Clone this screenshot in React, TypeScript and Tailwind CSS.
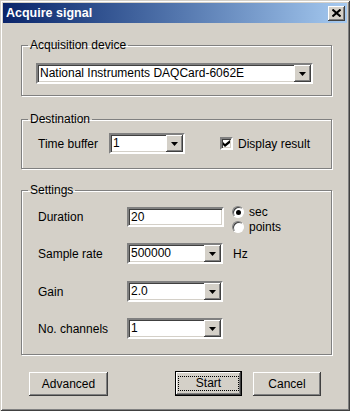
const font = "font-['Liberation_Sans',Arial,sans-serif] text-[12px] text-black";

const sunken =
  "border-2 border-t-[#808080] border-l-[#808080] border-b-white border-r-white shadow-[inset_1px_1px_0_#404040,inset_-1px_-1px_0_#d4d0c8]";

const raised =
  "bg-[#d4d0c8] shadow-[inset_-1px_-1px_0_#404040,inset_1px_1px_0_#ffffff,inset_-2px_-2px_0_#808080,inset_2px_2px_0_#d4d0c8]";

const DropButton = () => (
  <div className={`flex h-full w-[17px] items-center justify-center ${raised}`}>
    <svg width="7" height="4" viewBox="0 0 7 4">
      <path d="M0 0h7L3.5 4z" fill="#000" />
    </svg>
  </div>
);

const Combo = ({ value, width }: { value: string; width: string }) => (
  <div className={`flex h-[21px] bg-white ${width} ${sunken}`}>
    <span className="flex-1 pl-[2px] leading-[17px]">{value}</span>
    <DropButton />
  </div>
);

const GroupBox = ({
  title,
  className,
  children,
}: {
  title: string;
  className: string;
  children: React.ReactNode;
}) => (
  <fieldset
    className={`mx-0 border border-[#808080] p-0 shadow-[1px_1px_0_#ffffff,inset_1px_1px_0_#ffffff] ${className}`}
  >
    <legend className="ml-[6px] px-[2px] leading-[16px]">{title}</legend>
    {children}
  </fieldset>
);

const Button = ({ label, width, isDefault }: { label: string; width: string; isDefault?: boolean }) =>
  isDefault ? (
    <div className={`h-[25px] border border-black ${width}`}>
      <div className={`flex h-full items-center justify-center ${raised}`}>
        <span className="border border-dotted border-black px-[17px] leading-[13px]">{label}</span>
      </div>
    </div>
  ) : (
    <div className={`flex h-[24px] items-center justify-center ${raised} ${width}`}>{label}</div>
  );

export default function App() {
  return (
    <div
      className={`flex h-[411px] w-[350px] flex-col bg-[#d4d0c8] p-[3px] shadow-[inset_1px_1px_0_#d4d0c8,inset_-1px_-1px_0_#404040,inset_2px_2px_0_#ffffff,inset_-2px_-2px_0_#808080] ${font}`}
    >
      {/* title bar */}
      <div className="flex h-[20px] items-center justify-between bg-gradient-to-r from-[#0a246a] to-[#a6caf0] pl-[3px] pr-[2px]">
        <span className="text-[12.5px] font-bold text-white">Acquire signal</span>
        <div className={`flex h-[15px] w-[17px] items-center justify-center ${raised}`}>
          <svg width="9" height="8" viewBox="0 0 9 8">
            <path d="M0.5 0.5l8 7M8.5 0.5l-8 7" stroke="#000" strokeWidth="2" />
          </svg>
        </div>
      </div>

      <div className="flex flex-col pl-[18px] pr-[15px]">
        <GroupBox title="Acquisition device" className="mt-[14px] h-[59px]">
          <div className="mt-[10px] pl-[14px]">
            <Combo value="National Instruments DAQCard-6062E" width="w-[277px]" />
          </div>
        </GroupBox>

        <GroupBox title="Destination" className="mt-[15px] h-[58px]">
          <div className="mt-[6px] flex items-center pl-[16px]">
            <span className="w-[71px]">Time buffer</span>
            <Combo value="1" width="w-[76px]" />
            <div className="ml-[35px] flex items-center gap-[5px]">
              <div className={`flex h-[13px] w-[13px] items-center justify-center bg-white ${sunken}`}>
                <svg width="7" height="7" viewBox="0 0 7 7">
                  <path d="M0 2l2 2 5-4v3L2 7 0 5z" fill="#000" />
                </svg>
              </div>
              <span>Display result</span>
            </div>
          </div>
        </GroupBox>

        <GroupBox title="Settings" className="mt-[13px] h-[173px]">
          <div className="flex flex-col pl-[16px]">
            <div className="mt-[9px] flex h-[20px] items-start">
              <span className="w-[89px] self-center">Duration</span>
              <div className={`h-[20px] w-[97px] bg-white pl-[2px] leading-[16px] ${sunken}`}>20</div>
              <div className="-mt-[2px] ml-[8px] flex flex-col">
                <div className="flex h-[14px] items-center gap-[5px]">
                  <div className="flex h-[12px] w-[12px] items-center justify-center rounded-full border border-t-[#808080] border-l-[#808080] border-b-white border-r-white bg-white shadow-[inset_1px_1px_0_#404040]">
                    <div className="h-[5px] w-[5px] rounded-full bg-black" />
                  </div>
                  <span>sec</span>
                </div>
                <div className="mt-[1px] flex h-[14px] items-center gap-[5px]">
                  <div className="h-[12px] w-[12px] rounded-full border border-t-[#808080] border-l-[#808080] border-b-white border-r-white bg-white shadow-[inset_1px_1px_0_#404040]" />
                  <span>points</span>
                </div>
              </div>
            </div>

            <div className="mt-[16px] flex items-center">
              <span className="w-[89px]">Sample rate</span>
              <Combo value="500000" width="w-[96px]" />
              <span className="ml-[10px]">Hz</span>
            </div>

            <div className="mt-[17px] flex items-center">
              <span className="w-[89px]">Gain</span>
              <Combo value="2.0" width="w-[96px]" />
            </div>

            <div className="mt-[16px] flex items-center">
              <span className="w-[89px]">No. channels</span>
              <Combo value="1" width="w-[96px]" />
            </div>
          </div>
        </GroupBox>

        <div className="mt-[16px] flex items-center pl-[8px]">
          <Button label="Advanced" width="w-[79px]" />
          <div className="ml-[67px]">
            <Button label="Start" width="w-[67px]" isDefault />
          </div>
          <div className="ml-[11px]">
            <Button label="Cancel" width="w-[68px]" />
          </div>
        </div>
      </div>
    </div>
  );
}
